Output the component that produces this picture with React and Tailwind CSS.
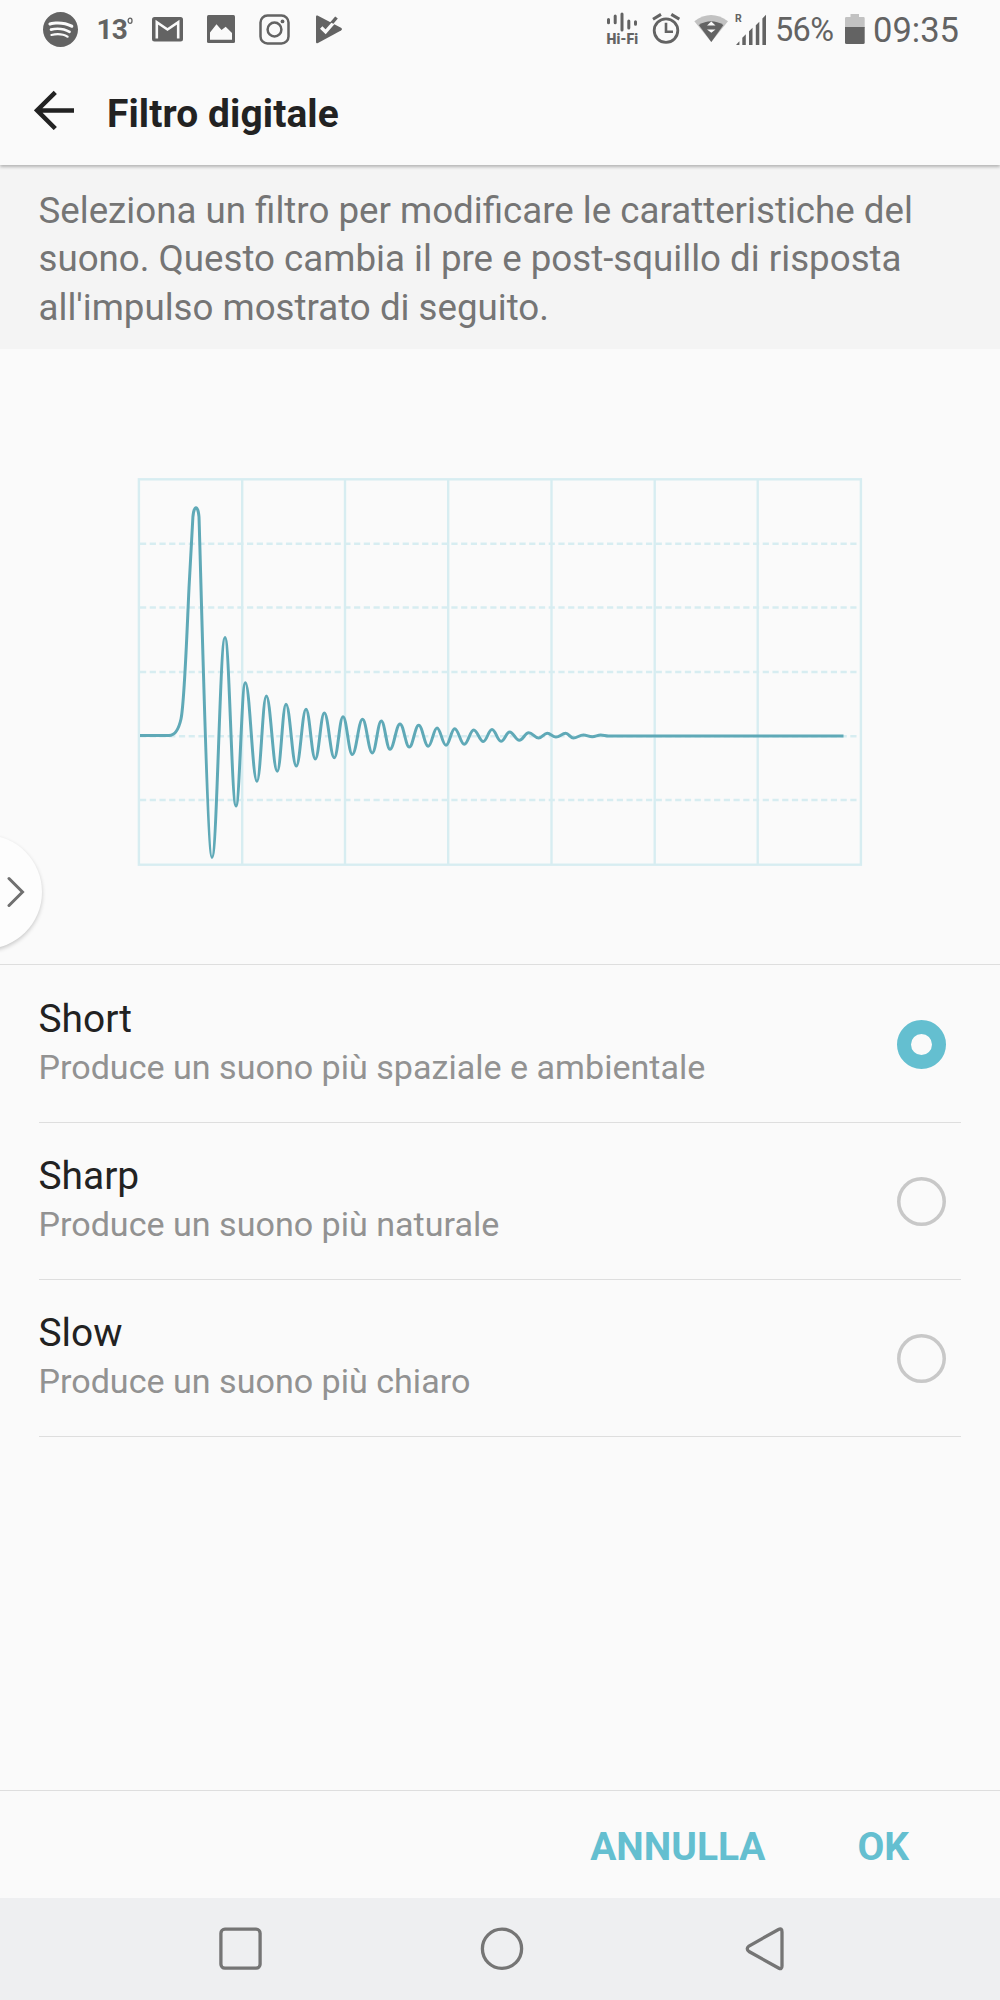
import React, { useState } from "react";
import { SiSpotify } from "react-icons/si";

const GREY = "#636363";
const TEAL = "#5fa9b7";
const GRID = "#d7edf1";

const extrema = [
  [212, 857.4], [225, 637.5], [236, 806], [245.3, 682.7], [257, 781.3], [266.3, 696],
  [277.3, 771.3], [286, 704.3], [296.3, 766], [306, 709.3], [315.3, 759], [324.3, 713],
  [334.3, 757.7], [343, 716.7], [352.3, 754.5], [362.5, 719.3], [372.3, 753], [381.3, 721],
  [390, 749.3], [400, 724], [409.3, 747], [418.7, 725.3], [428.3, 746.3], [437, 728],
  [446, 745.3], [454.7, 728.7], [464.3, 744.3], [473.7, 730], [483.3, 741.5], [492, 729.5],
  [501, 741.3], [509.7, 732], [519.3, 740.3], [528.7, 732.7], [538.7, 738], [547.3, 733.3],
  [556, 737], [565.7, 733.3], [573.3, 738], [583.3, 735], [592.3, 736.7], [600.7, 735], [608.3, 736],
];

function buildWave() {
  let d = "M140 735.5H169C175 735.5 179 728 181 719C184.5 703 187 630 189 588L192.9 517C194 504.5 198 504.5 199 517";
  d += "C200.5 560 207.5 857.4 212 857.4";
  let [px, py] = extrema[0];
  extrema.slice(1).forEach(([x, y]) => {
    const c = (x - px) * 0.39;
    d += `C${px + c} ${py} ${x - c} ${y} ${x} ${y}`;
    px = x;
    py = y;
  });
  return d + "H843.5";
}

function ImpulseChart() {
  return (
    <svg className="block" width="726" height="390" viewBox="137 477 726 390" fill="none">
      <g stroke={GRID} strokeWidth="2.4">
        {[543.8, 607.5, 672, 736.3, 800].map((y) => (
          <path key={y} d={`M140 ${y}H857`} strokeDasharray="6.2 3.53" />
        ))}
        {[242.2, 345, 448.2, 551.5, 654.7, 757.7].map((x) => (
          <path key={x} d={`M${x} 480V864`} />
        ))}
        <rect x="138.9" y="479.3" width="722" height="385.4" />
      </g>
      <path d={buildWave()} stroke={TEAL} strokeWidth="3" strokeLinejoin="round" />
    </svg>
  );
}

function StatusBar() {
  return (
    <div className="flex h-[58px] items-center pr-[41px] pl-[43px] text-[#636363]">
      <SiSpotify size={35} />
      <div className="mt-px ml-[18.5px] flex w-[36.5px] items-start leading-[30px]">
        <span className="w-[30px] text-[28px] font-bold tracking-[-0.8px]">13</span>
        <svg width="7" height="10" viewBox="0 0 7 10" fill="none" stroke={GREY} strokeWidth="1.4">
          <ellipse cx="3.3" cy="5.8" rx="2.1" ry="2.8" />
        </svg>
      </div>
      <svg className="ml-[19px]" width="32" height="26" viewBox="152 16 32 26">
        <rect x="152" y="17" width="31" height="24.5" rx="2.5" fill={GREY} />
        <path d="M156.8 38.5V22.2L167.5 29.5L178.2 22.2V38.5" fill="none" stroke="#fafafa" strokeWidth="2.6" />
      </svg>
      <svg className="ml-[23px]" width="28" height="28" viewBox="0 0 28 28">
        <rect width="28" height="28" rx="1.5" fill={GREY} />
        <path d="M3 24.8V17.5L9.5 9.3L14.5 15L18.7 11.8L25 18V24.8Z" fill="#fafafa" />
      </svg>
      <svg className="ml-6" width="31" height="31" viewBox="0 0 31 31" fill="none" stroke={GREY} strokeWidth="2.5">
        <rect x="1.5" y="1.5" width="28" height="28" rx="7" />
        <circle cx="15.5" cy="15.5" r="6.9" />
        <circle cx="23.5" cy="7.4" r="1.9" fill={GREY} stroke="none" />
      </svg>
      <svg className="ml-[26px]" width="27" height="29" viewBox="0 0 27 29">
        <defs>
          <clipPath id="play">
            <path d="M0 1.5Q0 0 1.5 .6L25 12.7Q27 14 25 15.4L2 28Q0 29 0 27Z" />
          </clipPath>
        </defs>
        <path d="M0 1.5Q0 0 1.5 .6L25 12.7Q27 14 25 15.4L2 28Q0 29 0 27Z" fill={GREY} />
        <path d="M14 10.2L20.5 2.5" stroke={GREY} strokeWidth="3.4" />
        <path clipPath="url(#play)" d="M5.2 12.6L9.6 16.8L19.5 5.5" fill="none" stroke="#fafafa" strokeWidth="3.4" />
      </svg>

      <svg className="ml-auto overflow-visible" width="34" height="34" viewBox="606 12 34 34" fill={GREY}>
        <path d="M608.5 19.5V22.8M615.2 16V22.8M622 14V30M628.8 21V28M635.5 21.8V24.3" stroke={GREY} strokeWidth="3" strokeLinecap="round" />
        <text x="606.6" y="44" fontSize="15" fontWeight="900" textLength="31.5" lengthAdjust="spacingAndGlyphs" fontFamily="Roboto">Hi-Fi</text>
      </svg>
      <svg className="ml-[12px]" width="28" height="32" viewBox="652 13 28 32" fill="none" stroke={GREY}>
        <circle cx="666" cy="30.6" r="11.8" strokeWidth="2.8" />
        <path d="M653 19.2L661 14.4M679.3 19.2L671.3 14.4" strokeWidth="3" />
        <path d="M666 22.8V31.8H673" strokeWidth="2.6" />
      </svg>
      <svg className="ml-[14px]" width="35" height="30" viewBox="694 14 35 30">
        <path d="M694.3 21.3Q711 8.5 728 21.3L711.3 42Z" fill="#c2c2c2" />
        <path d="M698.8 25Q711 17.5 723.4 25L711.3 42Z" fill={GREY} />
        <path d="M711.3 21.5L715.5 25.6H707ZM711.3 32.8L715.5 29.5H707Z" fill="#fafafa" />
      </svg>
      <svg className="ml-[6px] overflow-visible" width="32" height="34" viewBox="735 11 32 34" fill={GREY}>
        <text x="735" y="21.2" fontSize="10.5" fontWeight="700" fontFamily="Roboto">R</text>
        <path d="M736 44L739.4 40.3V44ZM742.3 44V36.8L745.8 33.3V44ZM749 44V30.3L752.5 26.8V44ZM755.8 44V24.2L759.3 20.7V44ZM762.4 44V17.5L766 13.8V44Z" />
      </svg>
      <span className="mt-[3px] ml-[8px] w-[58px] text-[32.5px] leading-none tracking-[-0.7px] whitespace-nowrap">56%</span>
      <svg className="ml-[12px]" width="20" height="31" viewBox="0 0 20 31">
        <path d="M5.5 0H14V3H18.5Q19.7 3 19.7 4.2V14H0V4.2Q0 3 1.2 3H5.5Z" fill="#c2c2c2" />
        <path d="M0 13H19.7V28.5Q19.7 30 18.2 30H1.5Q0 30 0 28.5Z" fill={GREY} />
      </svg>
      <span className="mt-[3px] ml-[8px] w-[86px] text-[34.5px] leading-none whitespace-nowrap">09:35</span>
    </div>
  );
}

const options = [
  { title: "Short", text: "Produce un suono più spaziale e ambientale" },
  { title: "Sharp", text: "Produce un suono più naturale" },
  { title: "Slow", text: "Produce un suono più chiaro" },
];

export default function App() {
  const [selected, setSelected] = useState(0);
  return (
    <div className="flex h-[2000px] w-[1000px] flex-col overflow-hidden bg-[#fafafa] font-['Roboto',sans-serif] antialiased">
      <header className="relative h-[165px] shrink-0 bg-[#fafafa] shadow-[0_2px_3px_rgba(0,0,0,0.26)]">
        <StatusBar />
        <div className="mt-8 flex h-10 items-center pl-[34px]">
          <svg width="41" height="40" viewBox="34 90 41 40" fill="none" stroke="#222" strokeWidth="4.5">
            <path d="M55.3 92.3L37 110.4L55.3 128.5M37 110.4H74" />
          </svg>
          <h1 className="mt-[7px] ml-[32px] text-[38.9px] leading-10 font-bold tracking-[0.1px] text-[#222]">Filtro digitale</h1>
        </div>
      </header>

      <p className="h-[184px] shrink-0 bg-[#f4f4f4] pt-[22px] pl-[38.5px] text-[36.7px] leading-[48.4px] whitespace-nowrap text-[#757575]">
        Seleziona un filtro per modificare le caratteristiche del<br />
        suono. Questo cambia il pre e post-squillo di risposta<br />
        all'impulso mostrato di seguito.
      </p>

      <section className="relative h-[616px] shrink-0 border-b border-[#dedede] pt-32 pl-[137px]">
        <ImpulseChart />
        <button className="absolute top-[486px] -left-[72px] flex size-[114px] items-center justify-end rounded-full bg-[#fdfdfd] pr-[17px] shadow-[0_2px_4px_rgba(0,0,0,0.2)]">
          <svg width="18" height="32" viewBox="0 0 18 32" fill="none" stroke="#707070" strokeWidth="3" strokeLinecap="round">
            <path d="M2 2.5L15.5 16L2 29.5" />
          </svg>
        </button>
      </section>

      <ul className="mx-[39px] pt-px">
        {options.map((o, i) => (
          <li
            key={o.title}
            onClick={() => setSelected(i)}
            className="flex h-[157px] items-center justify-between border-b border-[#dedede] pr-[15px]"
          >
            <div className="-ml-[0.5px] flex flex-col pb-[2px]">
              <span className="text-[38.9px] leading-[48px] text-[#222]">{o.title}</span>
              <span className="text-[34.1px] leading-[48px] text-[#929292]">{o.text}</span>
            </div>
            <span
              className={
                selected === i
                  ? "size-[49px] rounded-full border-[14px] border-[#64bfd0]"
                  : "size-[49px] rounded-full shadow-[inset_0_0_0_3.5px_#c8c8c8]"
              }
            />
          </li>
        ))}
      </ul>

      <footer className="mt-auto flex h-[108px] shrink-0 items-center justify-end gap-[92px] border-t border-[#dedede] pt-[5px] pr-[91px] text-[38.9px] font-bold text-[#64bfd0]">
        <button>ANNULLA</button>
        <button>OK</button>
      </footer>
      <nav className="flex h-[102px] shrink-0 items-center bg-[#eeeff1] pl-[219px]">
        <svg width="565" height="44" viewBox="219 1927 565 44" fill="none" stroke="#757575" strokeWidth="3.3">
          <rect x="220.9" y="1929.2" width="39.2" height="39" rx="4" />
          <circle cx="502" cy="1948.8" r="19.6" />
          <path d="M778.5 1929.5Q782 1927.5 782 1932V1966Q782 1970 778.5 1968L749 1951.5Q745.5 1948.8 749 1946Z" />
        </svg>
      </nav>
    </div>
  );
}
